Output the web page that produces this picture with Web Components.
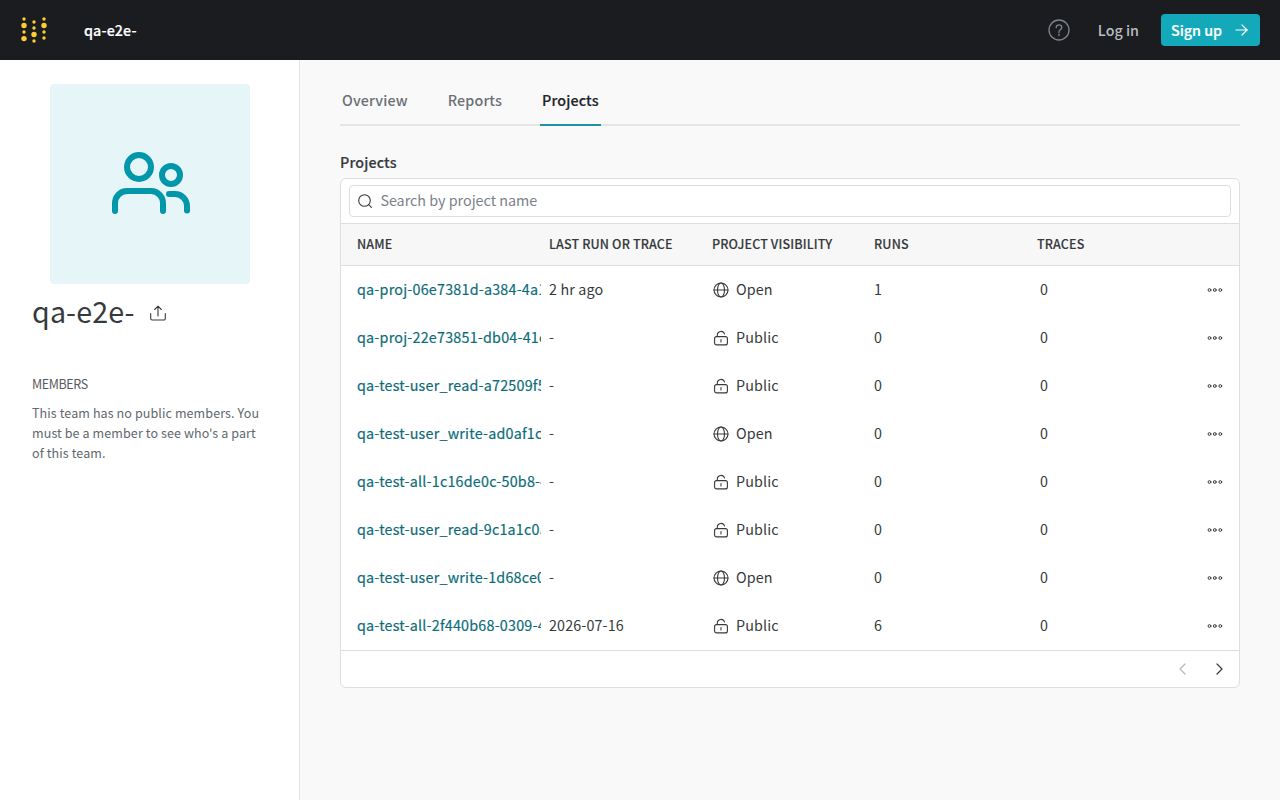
<!DOCTYPE html>
<html lang="en">
<head>
<meta charset="utf-8">
<title>qa-e2e- projects</title>
<style>
  :root {
    --font: "Noto Sans CJK SC", "Open Sans", sans-serif;
    --border: #dcdee0;
    --text: #363a3d;
    --teal: #0097ab;
  }

  body {
    margin: 0;
    background: #f9f9f9;
    color: var(--text);
    font: 14.32px/24px var(--font);
    letter-spacing: 0.13px;
  }
</style>
</head>
<body>
<team-page></team-page>

<script>
const ICONS = {
  logo: `<g fill="#fc3" stroke="none">
    <circle cx="4" cy="2" r="1.7"/><circle cx="4" cy="8.5" r="2.7"/><circle cx="4" cy="15" r="1.7"/><circle cx="4" cy="21.6" r="2.7"/>
    <circle cx="14" cy="5" r="1.7"/><circle cx="14" cy="11" r="1.7"/><circle cx="14" cy="17.5" r="2.7"/><circle cx="14" cy="24" r="1.7"/>
    <circle cx="24" cy="2" r="1.7"/><circle cx="24" cy="8.5" r="2.7"/><circle cx="24" cy="15" r="1.7"/><circle cx="24" cy="21" r="1.7"/></g>`,
  help: `<circle cx="11" cy="11" r="10"/><path d="M8.2 8.6C8.3 6.9 9.4 5.9 11 5.9s2.8 1 2.8 2.5c0 2.2-2.8 2.3-2.8 4.4v.6"/><path d="M11 15.1v1.5"/>`,
  arrow: `<path d="M1 7h11.500M7 2l5 5-5 5"/>`,
  team: `<circle cx="27" cy="15" r="12"/><circle cx="59" cy="23" r="9"/><path d="M3 59v-8a12 12 0 0 1 12-12h24a12 12 0 0 1 12 12v8M57 42h6a12 12 0 0 1 12 12v4.500"/>`,
  upload: `<path d="M.7 8.500v5a1.500 1.500 0 0 0 1.500 1.500h11.600a1.500 1.500 0 0 0 1.500-1.500v-5M8 11V1.500M4.700 4.500 8 1.200l3.300 3.300"/>`,
  search: `<circle cx="6.500" cy="6.500" r="5.800"/><path d="m10.700 10.700 2.700 2.700"/>`,
  globe: `<circle cx="8" cy="8" r="7"/><ellipse cx="8" cy="8" rx="3.500" ry="7"/><path d="M1 8h14"/>`,
  unlock: `<rect x="1.600" y="6.600" width="12.800" height="8.300" rx="2"/><path d="M4.300 6.500V5a3.700 3.700 0 0 1 7.200-1.100M8 9.600v2.400"/>`,
  dots: `<circle cx="2.500" cy="3" r="1.400"/><circle cx="7.800" cy="3" r="1.400"/><circle cx="13.300" cy="3" r="1.400"/>`,
  prev: `<path d="M6 1 1 6l5 5"/>`,
  next: `<path d="m1 1 5 5-5 5"/>`,
};

class UiIcon extends HTMLElement {
  constructor() {
    super();
    this.attachShadow({ mode: 'open' });
  }

  connectedCallback() {
    const w = this.getAttribute('w') || 16;
    const h = this.getAttribute('h') || w;
    const stroke = this.getAttribute('stroke') || 1.1;
    this.shadowRoot.innerHTML = `
      <style>
        :host { display: inline-flex; flex: none; }
        svg { display: block; overflow: visible; }
      </style>
      <svg width="${w}" height="${h}" viewBox="0 0 ${w} ${h}" fill="none" stroke="currentColor"
        stroke-width="${stroke}" stroke-linecap="round" stroke-linejoin="round">${ICONS[this.getAttribute('name')]}</svg>
    `;
  }
}

class TopBar extends HTMLElement {
  constructor() {
    super();
    this.attachShadow({ mode: 'open' }).innerHTML = `
      <style>
        :host {
          display: flex;
          align-items: center;
          height: 60px;
          padding: 0 20px;
          box-sizing: border-box;
          background: #1a1c1f;
          color: #fff;
          font-weight: 500;
        }
        .name { margin-left: 36px; -webkit-text-stroke: 0.2px; letter-spacing: 0.1px; }
        .help { margin-left: auto; color: #7f858d; }
        .login { margin: 0 22px 0 28px; color: #b9bcc1; letter-spacing: 0; }
        .signup {
          display: flex;
          align-items: center;
          justify-content: space-between;
          width: 99px;
          height: 32px;
          padding: 0 11px 0 10px;
          box-sizing: border-box;
          border-radius: 4px;
          background: #13a9ba;
          letter-spacing: 0;
          -webkit-text-stroke: 0.2px;
        }
      </style>
      <ui-icon name="logo" w="28" h="26"></ui-icon>
      <span class="name"><slot></slot></span>
      <ui-icon class="help" name="help" w="22" stroke="1.3"></ui-icon>
      <span class="login">Log in</span>
      <span class="signup">Sign up<ui-icon name="arrow" w="14" stroke="1.2"></ui-icon></span>
    `;
  }
}

class TeamSidebar extends HTMLElement {
  constructor() {
    super();
    this.attachShadow({ mode: 'open' }).innerHTML = `
      <style>
        :host {
          display: block;
          padding: 24px 32px;
          box-sizing: border-box;
          border-right: 1px solid #e4e5e6;
          background: #fff;
        }
        .avatar {
          display: flex;
          justify-content: center;
          align-items: center;
          width: 200px;
          height: 200px;
          margin-left: 18px;
          border-radius: 4px;
          background: #e5f5f8;
          color: var(--teal);
        }
        .avatar ui-icon { padding: 0 0 2px 2px; }
        .title {
          display: flex;
          align-items: center;
          gap: 15px;
          height: 58px;
          font-size: 28.64px;
        }
        .title span { padding-bottom: 5px; }
        h2 {
          margin: 32px 0 9px;
          color: #565c63;
          font-size: 12.53px;
          font-weight: 400;
          line-height: 20px;
          letter-spacing: -0.4px;
        }
        p {
          margin: 0;
          color: #62686f;
          font-size: 12.53px;
          line-height: 20px;
          letter-spacing: 0.1px;
        }
      </style>
      <div class="avatar"><ui-icon name="team" w="78" h="62" stroke="6"></ui-icon></div>
      <div class="title"><span><slot name="title"></slot></span><ui-icon name="upload"></ui-icon></div>
      <h2>MEMBERS</h2>
      <p><slot></slot></p>
    `;
  }
}

class TabBar extends HTMLElement {
  constructor() {
    super();
    this.attachShadow({ mode: 'open' });
  }

  connectedCallback() {
    const active = this.getAttribute('active');
    const tabs = this.getAttribute('tabs').split(',');
    this.shadowRoot.innerHTML = `
      <style>
        :host {
          display: flex;
          gap: 36px;
          height: 40px;
          border-bottom: 2px solid #e4e5e6;
          color: #6b7076;
          font-weight: 500;
        }
        span { height: 36px; padding: 4px 2px 0; }
        .active { border-bottom: 2px solid #1f93a6; color: #212529; -webkit-text-stroke: 0.15px; }
      </style>
      ${tabs.map((tab) => `<span class="${tab === active ? 'active' : ''}">${tab}</span>`).join('')}
    `;
  }
}

class ProjectRow extends HTMLElement {
  constructor() {
    super();
    this.attachShadow({ mode: 'open' });
  }

  connectedCallback() {
    const visibility = this.getAttribute('visibility');
    this.shadowRoot.innerHTML = `
      <style>
        :host {
          display: grid;
          grid-template-columns: var(--columns);
          align-items: center;
          height: 48px;
          padding: 0 16px;
        }
        .text { padding-bottom: 2px; }
        .name {
          margin-right: 8px;
          overflow: hidden;
          white-space: nowrap;
          color: #0b6c79;
          letter-spacing: 0.22px;
          -webkit-text-stroke: 0.18px;
        }
        .visibility { display: flex; align-items: center; gap: 7px; padding-left: 1px; }
        .traces { padding-left: 3px; }
        ui-icon[name="dots"] { justify-self: end; }
      </style>
      <span class="name text"><slot></slot></span>
      <span class="text">${this.getAttribute('last') || '-'}</span>
      <span class="visibility">
        <ui-icon name="${visibility === 'Open' ? 'globe' : 'unlock'}"></ui-icon><span class="text">${visibility}</span>
      </span>
      <span class="text">${this.getAttribute('runs') || 0}</span>
      <span class="traces text">0</span>
      <ui-icon name="dots" w="16" h="6" stroke="1"></ui-icon>
    `;
  }
}

class ProjectTable extends HTMLElement {
  constructor() {
    super();
    this.attachShadow({ mode: 'open' }).innerHTML = `
      <style>
        :host {
          --columns: 192px 163px 162px 163px 1fr 30px;
          display: block;
          border: 1px solid var(--border);
          border-radius: 6px;
          background: #fff;
          overflow: hidden;
        }
        .search {
          display: flex;
          align-items: center;
          gap: 8px;
          height: 30px;
          margin: 6px 8px;
          padding-left: 8px;
          border: 1px solid var(--border);
          border-radius: 4px;
          color: #7a818a;
          letter-spacing: 0;
        }
        .search ui-icon { color: #363a3d; }
        .search span { padding: 0 0 2px 0.4px; }
        .head {
          display: grid;
          grid-template-columns: var(--columns);
          align-items: center;
          height: 40px;
          padding: 0 16px 1px;
          border: solid var(--border);
          border-width: 1px 0;
          background: #f7f7f7;
          font-size: 12.53px;
          font-weight: 500;
          white-space: nowrap;
          -webkit-text-stroke: 0.12px;
        }
        .foot {
          display: flex;
          justify-content: flex-end;
          align-items: center;
          gap: 30px;
          height: 36px;
          padding-right: 16px;
          border-top: 1px solid var(--border);
        }
        .prev { color: #b3b6ba; }
      </style>
      <div class="search"><ui-icon name="search" w="14"></ui-icon><span>Search by project name</span></div>
      <div class="head">
        <span>NAME</span><span>LAST RUN OR TRACE</span><span>PROJECT VISIBILITY</span><span>RUNS</span><span>TRACES</span>
      </div>
      <slot></slot>
      <div class="foot">
        <ui-icon class="prev" name="prev" w="7" h="12" stroke="1.2"></ui-icon>
        <ui-icon name="next" w="7" h="12" stroke="1.2"></ui-icon>
      </div>
    `;
  }
}

class TeamPage extends HTMLElement {
  constructor() {
    super();
    this.attachShadow({ mode: 'open' }).innerHTML = `
      <style>
        :host { display: grid; grid-template: 60px 740px / 300px 1fr; }
        top-bar { grid-column: 1 / -1; }
        main { padding: 24px 40px; }
        h1 {
          margin: 24px 0 4px;
          font-size: 14.32px;
          font-weight: 500;
          line-height: 24px;
          -webkit-text-stroke: 0.15px;
        }
      </style>
      <top-bar>qa-e2e-</top-bar>
      <team-sidebar>
        <span slot="title">qa-e2e-</span>
        This team has no public members. You must be a member to see who's a part of this team.
      </team-sidebar>
      <main>
        <tab-bar tabs="Overview,Reports,Projects" active="Projects"></tab-bar>
        <h1>Projects</h1>
        <project-table>
          <project-row visibility="Open" last="2 hr ago" runs="1">qa-proj-06e7381d-a384-4a1</project-row>
          <project-row visibility="Public">qa-proj-22e73851-db04-41c</project-row>
          <project-row visibility="Public">qa-test-user_read-a72509f5</project-row>
          <project-row visibility="Open">qa-test-user_write-ad0af1c</project-row>
          <project-row visibility="Public">qa-test-all-1c16de0c-50b8-4</project-row>
          <project-row visibility="Public">qa-test-user_read-9c1a1c0a</project-row>
          <project-row visibility="Open">qa-test-user_write-1d68ce0</project-row>
          <project-row visibility="Public" last="2026-07-16" runs="6">qa-test-all-2f440b68-0309-4</project-row>
        </project-table>
      </main>
    `;
  }
}

customElements.define('ui-icon', UiIcon);
customElements.define('top-bar', TopBar);
customElements.define('team-sidebar', TeamSidebar);
customElements.define('tab-bar', TabBar);
customElements.define('project-row', ProjectRow);
customElements.define('project-table', ProjectTable);
customElements.define('team-page', TeamPage);
</script>
</body>
</html>
